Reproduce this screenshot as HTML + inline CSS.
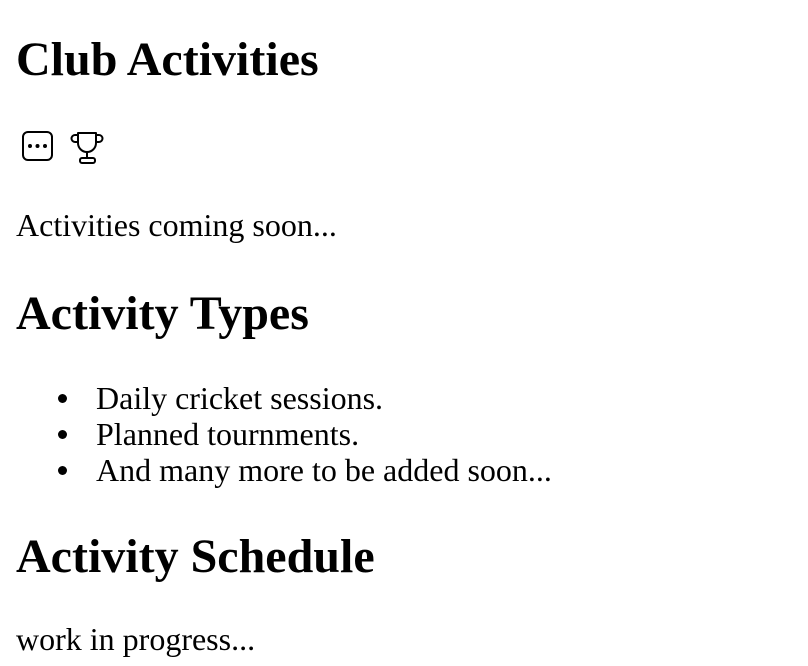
<!DOCTYPE html>
<html><head><meta charset="utf-8"><style>
html,body{margin:0;padding:0;background:#fff;width:808px;height:666px;overflow:hidden}
body{position:relative;font-family:"Liberation Serif","Times New Roman",serif;color:#000}
.t{position:absolute;left:16px;white-space:nowrap;line-height:1;margin:0}
.h{font-size:48px;font-weight:bold}
.p{font-size:32px}
.b{position:absolute;left:58px;width:9px;height:9px;border-radius:50%;background:#000}
</style></head><body>
<div class="t h" style="top:36px">Club Activities</div>
<svg style="position:absolute;left:0;top:0" width="120" height="180" fill="none" stroke="#000" stroke-width="2" stroke-linecap="round" stroke-linejoin="round">
<rect x="23" y="132" width="29" height="28" rx="5"/>
<circle cx="30" cy="146" r="1" fill="#000"/><circle cx="37.5" cy="146" r="1" fill="#000"/><circle cx="45" cy="146" r="1" fill="#000"/>
<path d="M78 133 H96 V143 A9 9 0 0 1 78 143 Z"/>
<path d="M78 135 H75 A3.5 3.5 0 0 0 75 142 H78"/>
<path d="M96 135 H99 A3.5 3.5 0 0 1 99 142 H96"/>
<path d="M87 152 V158"/>
<rect x="80" y="158" width="15" height="5" rx="2"/>
</svg>
<div class="t p" style="top:209px">Activities coming soon...</div>
<div class="t h" style="top:290px">Activity Types</div>
<div class="b" style="top:394px"></div>
<div class="t p" style="top:382px;left:96px">Daily cricket sessions.</div>
<div class="b" style="top:430px"></div>
<div class="t p" style="top:418px;left:96px">Planned tournments.</div>
<div class="b" style="top:466px"></div>
<div class="t p" style="top:454px;left:96px">And many more to be added soon...</div>
<div class="t h" style="top:533px">Activity Schedule</div>
<div class="t p" style="top:623px">work in progress...</div>
</body></html>
